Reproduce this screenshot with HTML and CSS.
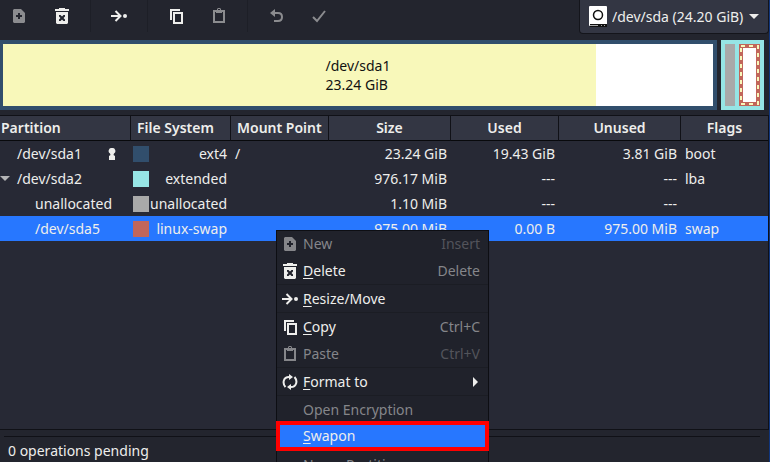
FILE: index.html
```html
<!DOCTYPE html>
<html lang="en">
<head>
<meta charset="utf-8">
<title>Partition editor</title>
<link rel="stylesheet" href="styles.css">
</head>
<body>
<svg class="sprite" aria-hidden="true">
  <symbol id="i-new" viewBox="0 0 16 16"><path fill="currentColor" fill-rule="evenodd" d="M3 1h7l4 4v9l-1 1H3l-1-1V2zM7 5v2H5v2h2v2h2V9h2V7H9V5z"/></symbol>
  <symbol id="i-delete" viewBox="0 0 16 16"><path fill="currentColor" fill-rule="evenodd" d="M1 1h4V0h6v1h4v2H1zM2 4h12v11l-1 1H3l-1-1zM5 7v1.500l1.500 1.500L5 11.500V13h1.500L8 11.500 9.500 13H11v-1.500L9.500 10 11 8.500V7H9.500L8 8.500 6.500 7z"/></symbol>
  <symbol id="i-move" viewBox="0 0 16 16"><path fill="none" stroke="currentColor" stroke-width="2" d="M0 8h9M4.500 3l5 5-5 5"/><circle cx="14" cy="8" r="2" fill="currentColor"/></symbol>
  <symbol id="i-copy" viewBox="0 0 16 16"><path fill="none" stroke="currentColor" stroke-width="2" d="M3 12V2h9M6 5h8v10H6z"/></symbol>
  <symbol id="i-paste" viewBox="0 0 16 16"><path fill="none" stroke="currentColor" stroke-width="2" d="M3 3h10v11H3z"/><path fill="currentColor" fill-rule="evenodd" d="M5 2h1V1l1-1h2l1 1v1h1v3H5zM7 1v1h2V1z"/></symbol>
  <symbol id="i-undo" viewBox="0 0 16 16"><path fill="none" stroke="currentColor" stroke-width="2" d="M5 5h5c3 0 4 2 4 4s-1 4-4 4H6"/><path fill="currentColor" d="M7 1v8L2 5z"/></symbol>
  <symbol id="i-apply" viewBox="0 0 16 16"><path fill="none" stroke="currentColor" stroke-width="2" d="M2 9l4 4 8-10"/></symbol>
  <symbol id="i-convert" viewBox="0 0 16 16"><path fill="none" stroke="currentColor" stroke-width="2" d="M8 3H7C1.500 3 0 9 3.500 13M8 13h1c5.500 0 7-6 3.500-10"/><path fill="currentColor" d="M7 0l4 3-4 3zM9 10v6l-4-3z"/></symbol>
  <symbol id="i-down" viewBox="0 0 10 5"><path fill="currentColor" d="M0 0h10L5 5z"/></symbol>
  <symbol id="i-right" viewBox="0 0 5 10"><path fill="currentColor" d="M0 0v10l5-5z"/></symbol>
  <symbol id="i-lock" viewBox="0 0 8 12"><path fill="currentColor" d="M4 0a3 3 0 0 1 2 5.500L5.500 7 7 8v4H1V8l1.500-1L2 5.500A3 3 0 0 1 4 0z"/></symbol>
</svg>

<div class="app">
  <header class="toolbar">
    <div class="tools">
      <button disabled aria-label="New"><svg class="icon"><use href="#i-new"/></svg></button>
      <button aria-label="Delete"><svg class="icon"><use href="#i-delete"/></svg></button>
      <span class="divider"></span>
      <button aria-label="Resize/Move"><svg class="icon"><use href="#i-move"/></svg></button>
      <span class="divider"></span>
      <button aria-label="Copy"><svg class="icon"><use href="#i-copy"/></svg></button>
      <button disabled aria-label="Paste"><svg class="icon"><use href="#i-paste"/></svg></button>
      <span class="divider"></span>
      <button disabled aria-label="Undo"><svg class="icon"><use href="#i-undo"/></svg></button>
      <button disabled aria-label="Apply"><svg class="icon"><use href="#i-apply"/></svg></button>
    </div>
    <div class="device">
      <label for="device" aria-label="Device">
        <svg class="disk" viewBox="0 0 18 21"><rect width="18" height="20" rx="1" fill="#fff"/><circle cx="9" cy="9" r="4.500" fill="#fff" stroke="#111" stroke-width="1.500"/><rect x="1" y="18" width="17" height="3" fill="#111"/><path stroke="#aaa" d="M1 19.500h8M12 19.500h1M15 19.500h1"/></svg>
      </label>
      <select id="device"><option>/dev/sda (24.20 GiB)</option></select>
      <svg class="arrow"><use href="#i-down"/></svg>
    </div>
  </header>

  <section class="map">
    <div class="part primary"><div class="used"></div><div class="caption">/dev/sda1<br>23.24 GiB</div></div>
    <div class="part extended">
      <div class="free"></div>
      <svg class="swap" viewBox="0 0 21 62"><rect width="21" height="62" fill="#c1665a"/><rect x="4" y="4" width="13" height="54" fill="#fff"/><rect x="2" y="2" width="17" height="58" fill="none" stroke="#f8f8ba" stroke-width="2" stroke-dasharray="4 4"/></svg>
    </div>
  </section>

  <main class="list">
    <table>
      <colgroup><col class="c-part"><col class="c-fs"><col class="c-mount"><col class="c-size"><col class="c-used"><col class="c-size"><col></colgroup>
      <thead><tr><th class="first">Partition</th><th class="left">File System</th><th class="left">Mount Point</th><th>Size</th><th>Used</th><th>Unused</th><th>Flags</th></tr></thead>
      <tbody>
        <tr><td><div class="name"><span class="expander"></span>/dev/sda1<svg class="lock"><use href="#i-lock"/></svg></div></td><td><div class="fs"><i class="swatch ext4"></i>ext4</div></td><td>/</td><td class="num">23.24 GiB</td><td class="num">19.43 GiB</td><td class="num">3.81 GiB</td><td>boot</td></tr>
        <tr><td><div class="name"><span class="expander"><svg class="arrow"><use href="#i-down"/></svg></span>/dev/sda2</div></td><td><div class="fs"><i class="swatch ext"></i>extended</div></td><td></td><td class="num">976.17 MiB</td><td class="num">---</td><td class="num">---</td><td>lba</td></tr>
        <tr><td><div class="name child">unallocated</div></td><td><div class="fs"><i class="swatch none"></i>unallocated</div></td><td></td><td class="num">1.10 MiB</td><td class="num">---</td><td class="num">---</td><td></td></tr>
        <tr class="selected"><td><div class="name child">/dev/sda5</div></td><td><div class="fs"><i class="swatch sw"></i>linux-swap</div></td><td></td><td class="num">975.00 MiB</td><td class="num">0.00 B</td><td class="num">975.00 MiB</td><td>swap</td></tr>
      </tbody>
    </table>
  </main>

  <footer class="status"><p>0 operations pending</p></footer>
</div>

<div class="menu" role="menu">
  <button role="menuitem" disabled><svg class="icon"><use href="#i-new"/></svg><span>New</span><kbd>Insert</kbd></button>
  <button role="menuitem"><svg class="icon"><use href="#i-delete"/></svg><span><u>D</u>elete</span><kbd>Delete</kbd></button>
  <hr>
  <button role="menuitem"><svg class="icon"><use href="#i-move"/></svg><span><u>R</u>esize/Move</span></button>
  <hr>
  <button role="menuitem"><svg class="icon"><use href="#i-copy"/></svg><span><u>C</u>opy</span><kbd>Ctrl+C</kbd></button>
  <button role="menuitem" disabled><svg class="icon"><use href="#i-paste"/></svg><span>Paste</span><kbd>Ctrl+V</kbd></button>
  <hr>
  <button role="menuitem"><svg class="icon"><use href="#i-convert"/></svg><span><u>F</u>ormat to</span><svg class="submenu"><use href="#i-right"/></svg></button>
  <hr>
  <button role="menuitem" disabled><span class="icon"></span><span>Open Encryption</span></button>
  <button role="menuitem" class="active"><span class="icon"></span><span><u>S</u>wapon</span></button>
  <button role="menuitem" disabled><span class="icon"></span><span>Name Partition</span></button>
</div>
</body>
</html>
```
FILE: styles.css
```css
* { box-sizing: border-box; }

body {
  margin: 0;
  height: 100vh;
  overflow: hidden;
  position: relative;
  background: #23252e;
  color: #eeeeec;
  font: 14px/20px "Noto Sans", sans-serif;
}

button, select { font: inherit; color: inherit; border: 0; background: none; padding: 0; }
svg { display: block; flex: none; }
.sprite { position: absolute; width: 0; height: 0; }
.icon { width: 16px; height: 16px; flex: none; }
.arrow { width: 10px; height: 5px; }

.app {
  height: 100%;
  display: flex;
  flex-direction: column;
  border-right: 1px solid #10357c;
}

.toolbar { display: flex; justify-content: space-between; height: 40px; flex: none; }
.tools { display: flex; gap: 1px; height: 32px; margin-left: -2px; }
.tools button { width: 42px; display: flex; align-items: center; justify-content: center; }
.tools button:disabled { color: #8b8c8f; }
.divider { width: 1px; margin: 0 6px; background: #1d1f27; }

.device {
  display: flex;
  align-items: center;
  gap: 5px;
  height: 34px;
  padding: 0 9px;
  background: #333643;
  border: 1px solid #14151b;
  border-top: 0;
  border-radius: 0 0 4px 4px;
}
.device select { appearance: none; }
.disk { width: 18px; height: 21px; }

.map { display: flex; gap: 4px; height: 70px; flex: none; padding-right: 5px; }
.part { border: 4px solid; display: flex; }
.primary {
  flex: 1;
  position: relative;
  border-color: #314e6c;
  border-left-width: 3px;
  background: #fff;
}
.used { width: 83.5%; background: #f8f8ba; }
.caption {
  position: absolute;
  inset: 0;
  display: flex;
  align-items: center;
  justify-content: center;
  color: #111;
  line-height: 19px;
}
.extended { border-color: #96e5e5; background: #96e5e5; gap: 4px; }
.free { width: 10px; background: #a9a9a9; }
.swap { width: 21px; height: 62px; }

.list {
  flex: 1;
  min-height: 0;
  margin-top: 5px;
  background: #272935;
  border: solid #101117;
  border-width: 1px 1px 1px 0;
}
table { width: 100%; table-layout: fixed; border-collapse: separate; border-spacing: 0; }
.c-part { width: 131px; }
.c-fs { width: 100px; }
.c-mount { width: 98px; }
.c-size { width: 122px; }
.c-used { width: 108px; }
th {
  height: 25px;
  padding: 0;
  background: #333643;
  border-right: 1px solid #101117;
  border-bottom: 1px solid #08090c;
  font-weight: 600;
}
th:last-child { border-right: 0; }
.left { text-align: left; padding-left: 6px; }
.first { text-align: left; padding-left: 1px; }
td { height: 25px; padding: 0 4px; white-space: nowrap; }
td:nth-child(1) { padding-left: 0; }
td:nth-child(2) { padding-left: 2px; }
.num { text-align: right; }
.name, .fs { display: flex; align-items: center; }
.fs { justify-content: space-between; }
.expander { width: 17px; color: #b4b4b6; }
.child { padding-left: 35px; }
.lock { width: 8px; height: 12px; margin-left: auto; margin-right: 11px; }
.swatch { width: 16px; height: 16px; flex: none; }
.ext4 { background: #314e6c; }
.ext { background: #96e5e5; }
.none { background: #a9a9a9; }
.sw { background: #c1665a; }
.selected { background: #2777ff; }

.status { height: 32px; flex: none; padding: 6px 9px 0 4px; }
.status p { margin: 0; padding: 4px; border-top: 1px solid #101117; }

.menu {
  position: absolute;
  left: 276px;
  top: 230px;
  width: 213px;
  background: #20222b;
  outline: 1px solid #0d0e13;
  outline-offset: -1px;
}
.menu button {
  display: flex;
  align-items: center;
  gap: 5px;
  width: 100%;
  height: 27px;
  padding: 0 9px 0 6px;
  text-align: left;
}
.menu button:disabled { color: #85868a; }
.menu kbd { margin-left: auto; font: inherit; color: #85868a; }
.menu button:disabled kbd { color: #53545b; }
.menu u { text-underline-offset: 2px; }
.menu hr { margin: 0 1px; border: 0; height: 1px; background: #1b1d24; }
.submenu { width: 5px; height: 10px; margin-left: auto; margin-right: 2px; }
.menu .active {
  position: relative;
  z-index: 1;
  height: 30px;
  margin: -2px 0 0;
  padding-left: 2px;
  border: 4px solid #f00;
  background: #2777ff;
}
```
